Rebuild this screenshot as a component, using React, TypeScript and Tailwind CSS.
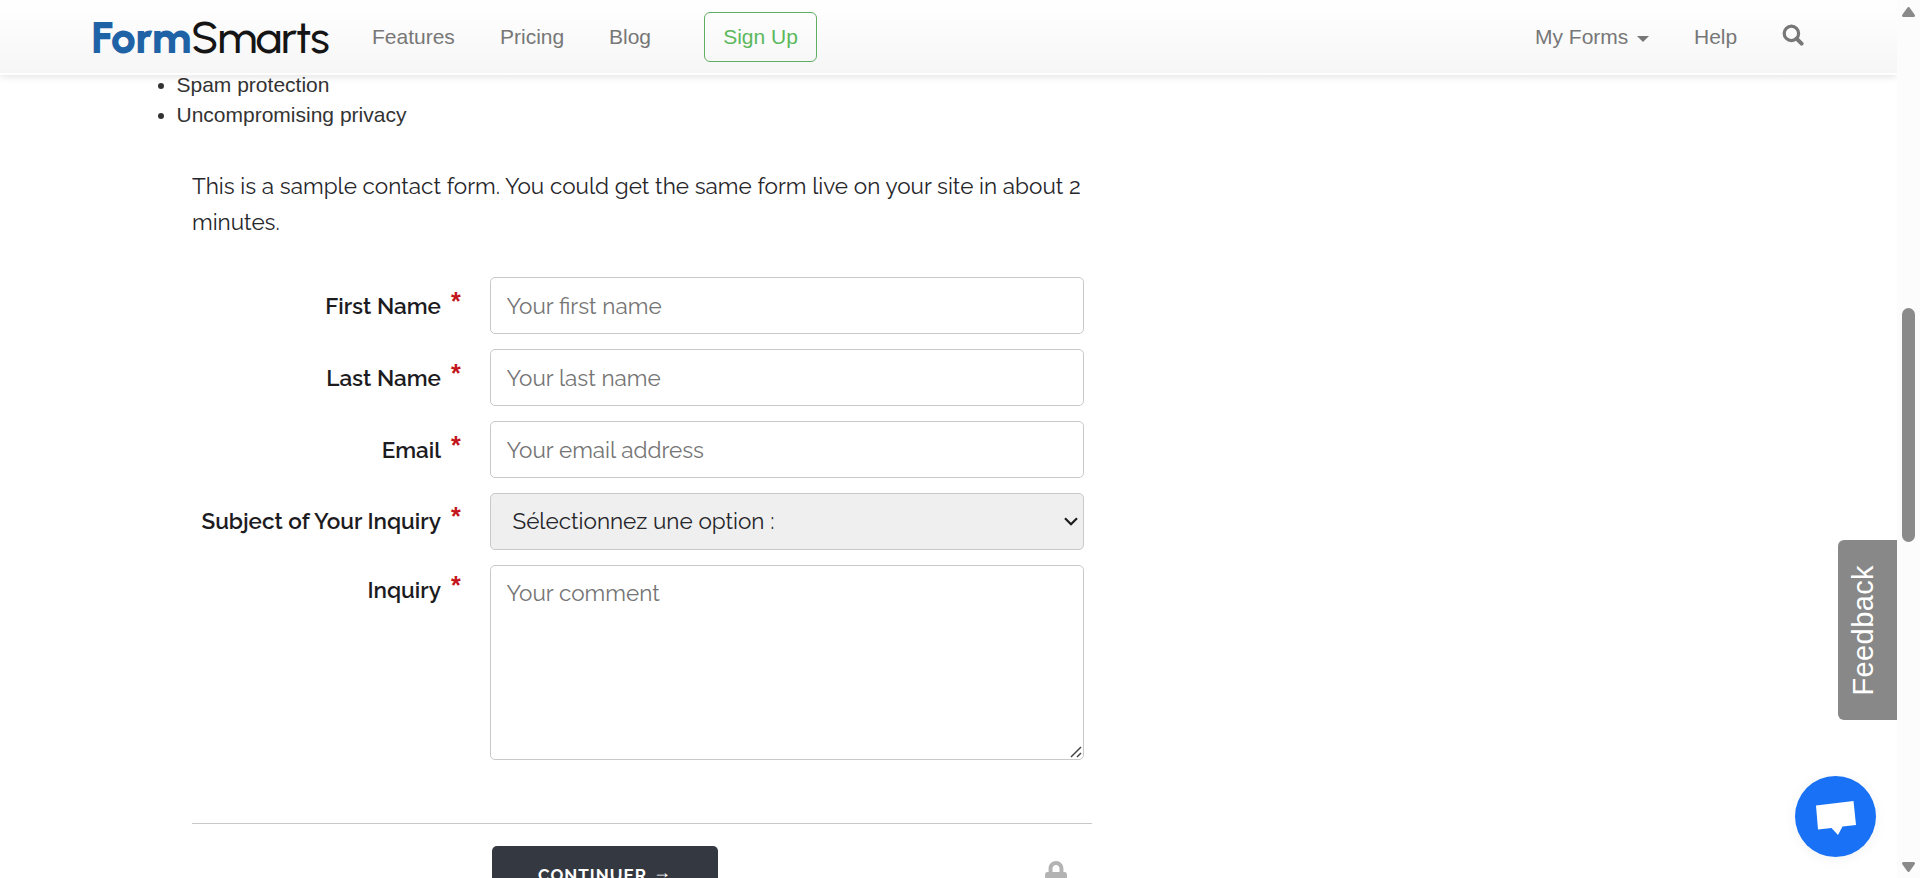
import React from "react";
import { FaLock } from "react-icons/fa";

const raleway = "font-['Raleway','Lato',sans-serif] text-[22.5px]";
const box = "block w-[594px] rounded-[5px] border border-[#c8c9ca] outline-none placeholder:text-[#757575] placeholder:opacity-100";

function Row({ label, top, children }: { label: string; top: string; children: React.ReactNode }) {
  return (
    <div className="flex items-start">
      <label className={`flex w-[298px] justify-end pr-[28px] leading-[30px] text-[#1c1c1f] ${top}`}>
        <span className="font-semibold whitespace-nowrap">{label}</span>
        <span className="ml-[10px] w-[11px] font-['Liberation_Sans',sans-serif] text-[25px] font-bold leading-[20px] text-[#c4161c]">*</span>
      </label>
      {children}
    </div>
  );
}

function Logo() {
  return (
    <a className="flex w-[242px] items-baseline font-['Urbanist','Lato',sans-serif] text-[45px] leading-[50px]">
      <span className="font-extrabold tracking-[-0.5px] text-[#1f62a6]">Form</span>
      <span className="font-medium tracking-[-1.2px] text-[#151515]">Smarts</span>
    </a>
  );
}

function Navbar() {
  return (
    <header className="relative z-10 flex h-[75px] shrink-0 items-start border-b-2 border-white bg-linear-to-b from-white to-[#f6f6f6] text-[21px] leading-[30px] text-[#777] shadow-[0_1px_8px_rgba(0,0,0,0.13)]">
      <div className="mt-[12px] ml-[91px]"><Logo /></div>
      <nav className="flex flex-1 items-start">
        <a className="mt-[22px] ml-[39px] w-[128px]">Features</a>
        <a className="mt-[22px] w-[109px]">Pricing</a>
        <a className="mt-[22px] w-[95px]">Blog</a>
        <a className="mt-[12px] flex h-[50px] w-[113px] items-center justify-center rounded-[6px] border border-[#5fae61] text-[#5cb85c]">Sign Up</a>
      </nav>
      <nav className="mt-[22px] mr-[93px] flex items-start">
        <a className="flex w-[159px] items-center">
          My Forms
          <svg className="mt-[4px] ml-[9px]" width="12" height="6" viewBox="0 0 12 6"><path d="M0 0h12L6 6z" fill="#777" /></svg>
        </a>
        <a className="w-[88px]">Help</a>
        <svg className="mt-[2px]" width="22" height="22" viewBox="0 0 22 22" fill="none" stroke="#777">
          <circle cx="9.4" cy="9.4" r="7.2" strokeWidth="3.2" />
          <path d="M14.6 14.6l5 5" strokeWidth="4" strokeLinecap="round" />
        </svg>
      </nav>
    </header>
  );
}

function Scrollbar() {
  return (
    <div className="relative z-20 flex w-[23px] shrink-0 flex-col items-center bg-[#fcfcfc]">
      <svg className="mt-[6px]" width="15" height="12" viewBox="0 0 15 12"><path d="M7.5 2.5L12.5 9.5h-10z" fill="#8a8a8a" stroke="#8a8a8a" strokeWidth="3" strokeLinejoin="round" /></svg>
      <div className="mt-[290px] h-[234px] w-[13px] rounded-full bg-[#8a8a8a]" />
      <svg className="mt-[319px]" width="15" height="12" viewBox="0 0 15 12"><path d="M7.5 9.5L12.5 2.5h-10z" fill="#8a8a8a" stroke="#8a8a8a" strokeWidth="3" strokeLinejoin="round" /></svg>
    </div>
  );
}

export default function App() {
  return (
    <div className="relative flex h-[878px] w-[1920px] overflow-hidden bg-white font-['Liberation_Sans',sans-serif]">
      <div className="flex w-[1897px] flex-col">
        <Navbar />
        <main className="flex flex-col">
          <ul className="mt-[-5px] ml-[176.5px] list-disc text-[21px] leading-[30px] text-[#333]">
            <li>Spam protection</li>
            <li>Uncompromising privacy</li>
          </ul>
          <form className={`ml-[192px] w-[900px] text-[#26262a] ${raleway}`}>
            <p className="mt-[38px] leading-[36px]">
              This is a sample contact form. You could get the same form live on your site in about 2
              minutes.
            </p>
            <div className="mt-[37px] flex flex-col gap-[15px]">
              <Row label="First Name" top="pt-[14px]">
                <input className={`${box} h-[57px] px-[15.5px]`} placeholder="Your first name" />
              </Row>
              <Row label="Last Name" top="pt-[14px]">
                <input className={`${box} h-[57px] px-[15.5px]`} placeholder="Your last name" />
              </Row>
              <Row label="Email" top="pt-[14px]">
                <input className={`${box} h-[57px] px-[15.5px]`} placeholder="Your email address" />
              </Row>
              <Row label="Subject of Your Inquiry" top="pt-[13px]">
                <div className={`${box} flex h-[57px] items-center justify-between bg-[#efefef] pr-[5px] pl-[21.5px]`}>
                  Sélectionnez une option :
                  <svg width="14" height="9" viewBox="0 0 14 9" fill="none"><path d="M1 1.2l6 6 6-6" stroke="#1c1c1f" strokeWidth="2.2" /></svg>
                </div>
              </Row>
              <Row label="Inquiry" top="pt-[10px]">
                <div className="relative">
                  <textarea className={`${box} h-[195px] resize-none px-[15.5px] py-[12px] leading-[30px]`} placeholder="Your comment" />
                  <svg className="absolute right-[2px] bottom-[2px]" width="12" height="12" viewBox="0 0 12 12"><path d="M1 11L11 1M7 11l4-4" stroke="#444" strokeWidth="1.5" /></svg>
                </div>
              </Row>
            </div>
            <hr className="mt-[63px] border-[#c8c9ca]" />
            <div className="mt-[22px] flex items-start">
              <button type="button" className="ml-[300px] flex h-[60px] w-[226px] items-center justify-center rounded-[5px] bg-[#343840] text-[17px] font-bold tracking-[1px] text-white">
                CONTINUER<span className="ml-[6px] pb-[7px] font-['Liberation_Sans',sans-serif] text-[18px] font-normal">→</span>
              </button>
              <FaLock className="mt-[15px] ml-[327px] h-[25px] w-[22px] text-[#b3b3b3]" />
            </div>
          </form>
        </main>
      </div>
      <Scrollbar />
      <div className="absolute top-[540px] left-[1838px] flex h-[180px] w-[59px] items-center justify-center rounded-l-[6px] bg-[#888]">
        <span className="rotate-180 pl-[7px] text-[29px] tracking-[0.4px] text-white [writing-mode:vertical-rl]">Feedback</span>
      </div>
      <div className="absolute top-[776px] left-[1795px] h-[81px] w-[81px] rounded-full bg-[#1972f5] shadow-[0_2px_14px_rgba(0,0,0,0.05)]">
        <svg width="81" height="81" viewBox="0 0 81 81"><path d="M21 29.5L58.500 25L61 49L47.500 50.500L43 59L36.500 52L23 53.500z" fill="#fff" /></svg>
      </div>
    </div>
  );
}
